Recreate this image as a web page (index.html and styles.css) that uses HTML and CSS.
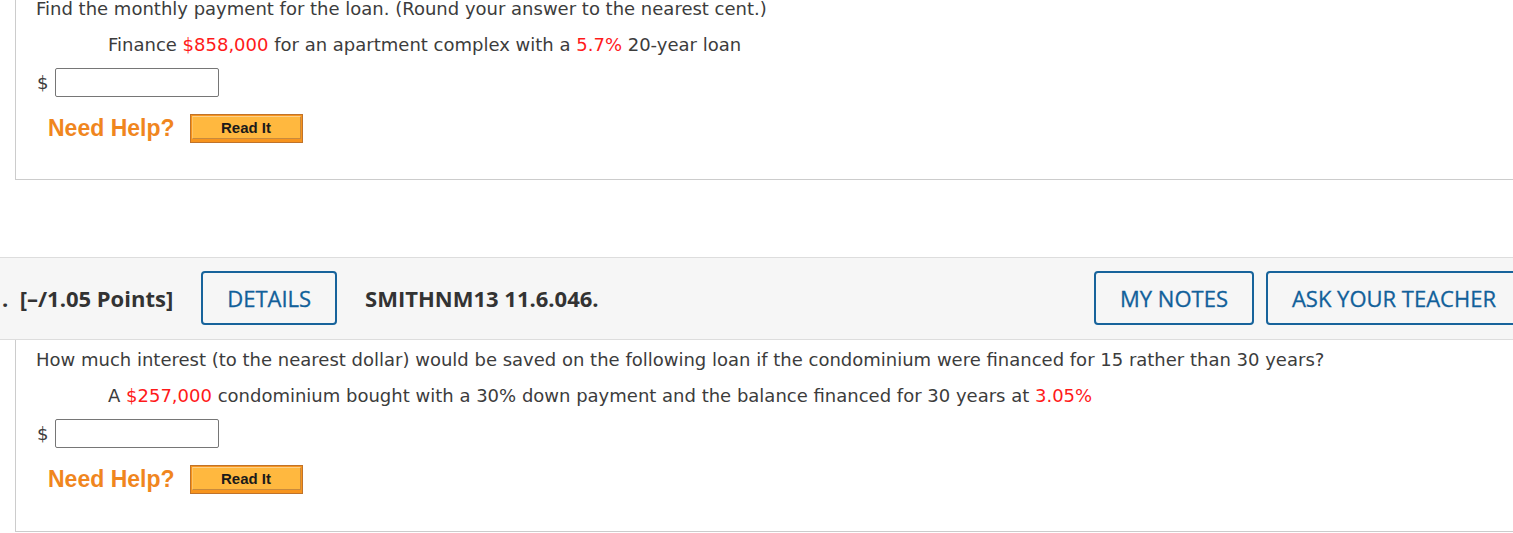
FILE: index.html
```
<!DOCTYPE html>
<html>
<head>
<meta charset="utf-8">
<link rel="stylesheet" href="styles.css">
</head>
<body>
<div class="page">
  <div class="qbody first">
    <p class="qtext">Find the monthly payment for the loan. (Round your answer to the nearest cent.)</p>
    <p class="qtext indent">Finance <span class="val">$858,000</span> for an apartment complex with a <span class="val">5.7%</span> 20-year loan</p>
    <div class="answer"><span class="dollar">$</span><span class="field"></span></div>
    <div class="help">
      <span class="need">Need Help?</span>
      <span class="readit"><span class="readit-inner">Read It</span></span>
    </div>
  </div>

  <div class="qhead">
    <span class="points">.&nbsp; [–/1.05 Points]</span>
    <span class="btn">DETAILS</span>
    <span class="code">SMITHNM13 11.6.046.</span>
    <span class="btn push">MY NOTES</span>
    <span class="btn">ASK YOUR TEACHER</span>
  </div>

  <div class="qbody last">
    <p class="qtext">How much interest (to the nearest dollar) would be saved on the following loan if the condominium were financed for 15 rather than 30 years?</p>
    <p class="qtext indent">A <span class="val">$257,000</span> condominium bought with a 30% down payment and the balance financed for 30 years at <span class="val">3.05%</span></p>
    <div class="answer"><span class="dollar">$</span><span class="field"></span></div>
    <div class="help">
      <span class="need">Need Help?</span>
      <span class="readit"><span class="readit-inner">Read It</span></span>
    </div>
  </div>
</div>
</body>
</html>
```
FILE: styles.css
```
html, body {
  margin: 0;
  padding: 0;
  background: #fff;
  overflow: hidden;
}
body {
  width: 1513px;
  height: 533px;
}
.page {
  width: 1540px;
}
.qbody {
  margin-left: 15px;
  border-left: 1px solid #cccccc;
  border-bottom: 1px solid #cccccc;
  padding: 9px 0 36px 20px;
}
.qbody.first {
  margin-top: -11px;
  margin-bottom: 77px;
}
.qbody.last {
  padding-bottom: 37px;
}
.qtext {
  margin: 0;
  font-family: "DejaVu Sans", Verdana, sans-serif;
  font-size: 18px;
  line-height: 22px;
  color: #3c3c3c;
}
.qtext.indent {
  margin-top: 14px;
  padding-left: 72px;
}
.val {
  color: #ff1a1a;
}
.answer {
  display: flex;
  align-items: center;
  margin-top: 12px;
  height: 29px;
}
.dollar {
  font-family: "DejaVu Sans", Verdana, sans-serif;
  font-size: 18px;
  color: #3c3c3c;
  width: 18px;
  padding-left: 1px;
}
.field {
  display: block;
  width: 162px;
  height: 27px;
  border: 1px solid #767676;
  border-radius: 2px;
  background: #fff;
}
.help {
  display: flex;
  align-items: center;
  margin-top: 17px;
  padding-left: 12px;
  height: 29px;
}
.need {
  font-family: "Liberation Sans", Arial, sans-serif;
  font-weight: bold;
  font-size: 23px;
  color: #f0861e;
  margin-right: 15px;
}
.readit {
  display: block;
  width: 109px;
  height: 25px;
  border: 1px solid #c0732a;
  background: #f7941d;
  padding: 1px;
}
.readit-inner {
  display: flex;
  align-items: center;
  justify-content: center;
  height: 21px;
  border: 1px solid #c98a3c;
  border-top-color: #fcd08a;
  border-left-color: #fcc46a;
  background: #ffb83f;
  font-family: "Liberation Sans", Arial, sans-serif;
  font-weight: bold;
  font-size: 15px;
  color: #1a1a1a;
}
.qhead {
  display: flex;
  align-items: center;
  background: #f6f6f6;
  border-top: 1px solid #dddddd;
  border-bottom: 1px solid #dddddd;
  padding: 13px 18px 14px 0;
  font-family: "Open Sans", "Noto Sans", sans-serif;
  font-size: 22px;
  color: #333;
}
.points {
  font-weight: bold;
  margin-left: 2px;
  margin-right: 28px;
}
.code {
  font-weight: bold;
  margin-left: 28px;
}
.btn {
  display: flex;
  align-items: center;
  height: 50px;
  padding: 0 24px;
  border: 2px solid #17639b;
  border-radius: 4px;
  color: #11609a;
  font-weight: 500;
  -webkit-text-stroke: 0.3px #11609a;
  background: transparent;
}
.btn.push {
  margin-left: auto;
  margin-right: 12px;
}
```
